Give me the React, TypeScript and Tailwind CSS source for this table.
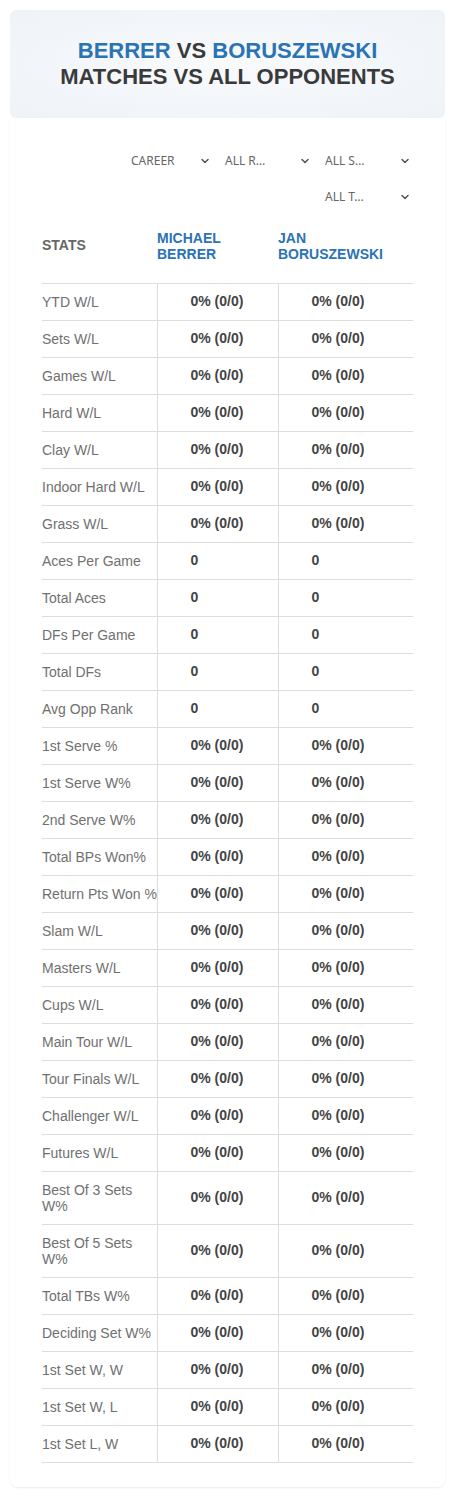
import { ChevronDown } from 'lucide-react';

const pct = '0% (0/0)';

const rows: [string, string][] = [
    ['YTD W/L', pct],
    ['Sets W/L', pct],
    ['Games W/L', pct],
    ['Hard W/L', pct],
    ['Clay W/L', pct],
    ['Indoor Hard W/L', pct],
    ['Grass W/L', pct],
    ['Aces Per Game', '0'],
    ['Total Aces', '0'],
    ['DFs Per Game', '0'],
    ['Total DFs', '0'],
    ['Avg Opp Rank', '0'],
    ['1st Serve %', pct],
    ['1st Serve W%', pct],
    ['2nd Serve W%', pct],
    ['Total BPs Won%', pct],
    ['Return Pts Won %', pct],
    ['Slam W/L', pct],
    ['Masters W/L', pct],
    ['Cups W/L', pct],
    ['Main Tour W/L', pct],
    ['Tour Finals W/L', pct],
    ['Challenger W/L', pct],
    ['Futures W/L', pct],
    ['Best Of 3 Sets W%', pct],
    ['Best Of 5 Sets W%', pct],
    ['Total TBs W%', pct],
    ['Deciding Set W%', pct],
    ['1st Set W, W', pct],
    ['1st Set W, L', pct],
    ['1st Set L, W', pct]
];

function Select({ label, narrow }: { label: string; narrow?: boolean }) {
    return (
        <div
            className={`${narrow ? 'w-[94px]' : 'w-[100px]'} flex items-center justify-between pl-[10px] pr-[4px] h-[24px] text-[12px] text-[#666] font-[family-name:Noto_Sans,sans-serif]`}
        >
            <span>{label}</span>
            <ChevronDown size={12} strokeWidth={3} className="text-[#555]" />
        </div>
    );
}

export default function App() {
    return (
        <div className="bg-white w-[455px] min-h-[1496px] font-[family-name:Liberation_Sans,Arial,sans-serif]">
            <div className="px-[10px] pt-[10px]">
                <div className="h-[108px] rounded-md bg-[radial-gradient(ellipse_at_center,#f9fafc_0%,#eef3f8_100%)] flex flex-col items-center justify-center text-[22px] font-bold leading-[26px] text-[#3a3a3a]">
                    <div>
                        <span className="text-[#2a73b5]">BERRER</span> VS{' '}
                        <span className="text-[#2a73b5]">BORUSZEWSKI</span>
                    </div>
                    <div>MATCHES VS ALL OPPONENTS</div>
                </div>
            </div>
            <div className="mx-[10px] rounded-b-lg shadow-[0_1px_2px_rgba(0,0,0,0.08)] pb-[24px]">
                <div className="flex flex-wrap justify-end gap-y-[12px] pt-[31px] pr-[30px] pl-[100px]">
                    <Select label="CAREER" narrow />
                    <Select label="ALL R…" />
                    <Select label="ALL S…" />
                    <Select label="ALL T…" />
                </div>
                <table className="ml-[32px] mt-[16px] w-[371px] border-collapse table-fixed text-[14px]">
                    <colgroup>
                        <col className="w-[115px]" />
                        <col className="w-[121px]" />
                        <col className="w-[135px]" />
                    </colgroup>
                    <thead>
                        <tr className="h-[58px] border-b border-[#dddddd] text-left">
                            <th className="font-bold text-[#666] align-middle pb-[16px]">STATS</th>
                            <th className="font-bold text-[#2a73b5] leading-[16px] pb-[16px]">
                                MICHAEL
                                <br />
                                BERRER
                            </th>
                            <th className="font-bold text-[#2a73b5] leading-[16px] pb-[16px]">
                                JAN
                                <br />
                                BORUSZEWSKI
                            </th>
                        </tr>
                    </thead>
                    <tbody>
                        {rows.map(([label, value]) => {
                            const tall = label.startsWith('Best Of');
                            return (
                                <tr key={label} className={`border-b border-[#dddddd] ${tall ? 'h-[53px]' : 'h-[37px]'}`}>
                                    <td className={`text-[#707070] leading-[16px] ${tall ? '' : 'whitespace-nowrap'}`}>{label}</td>
                                    <td className="border-l border-[#dddddd] pl-[33px] font-bold text-[#444]">{value}</td>
                                    <td className="border-l border-[#dddddd] pl-[33px] font-bold text-[#444]">{value}</td>
                                </tr>
                            );
                        })}
                    </tbody>
                </table>
            </div>
        </div>
    );
}
